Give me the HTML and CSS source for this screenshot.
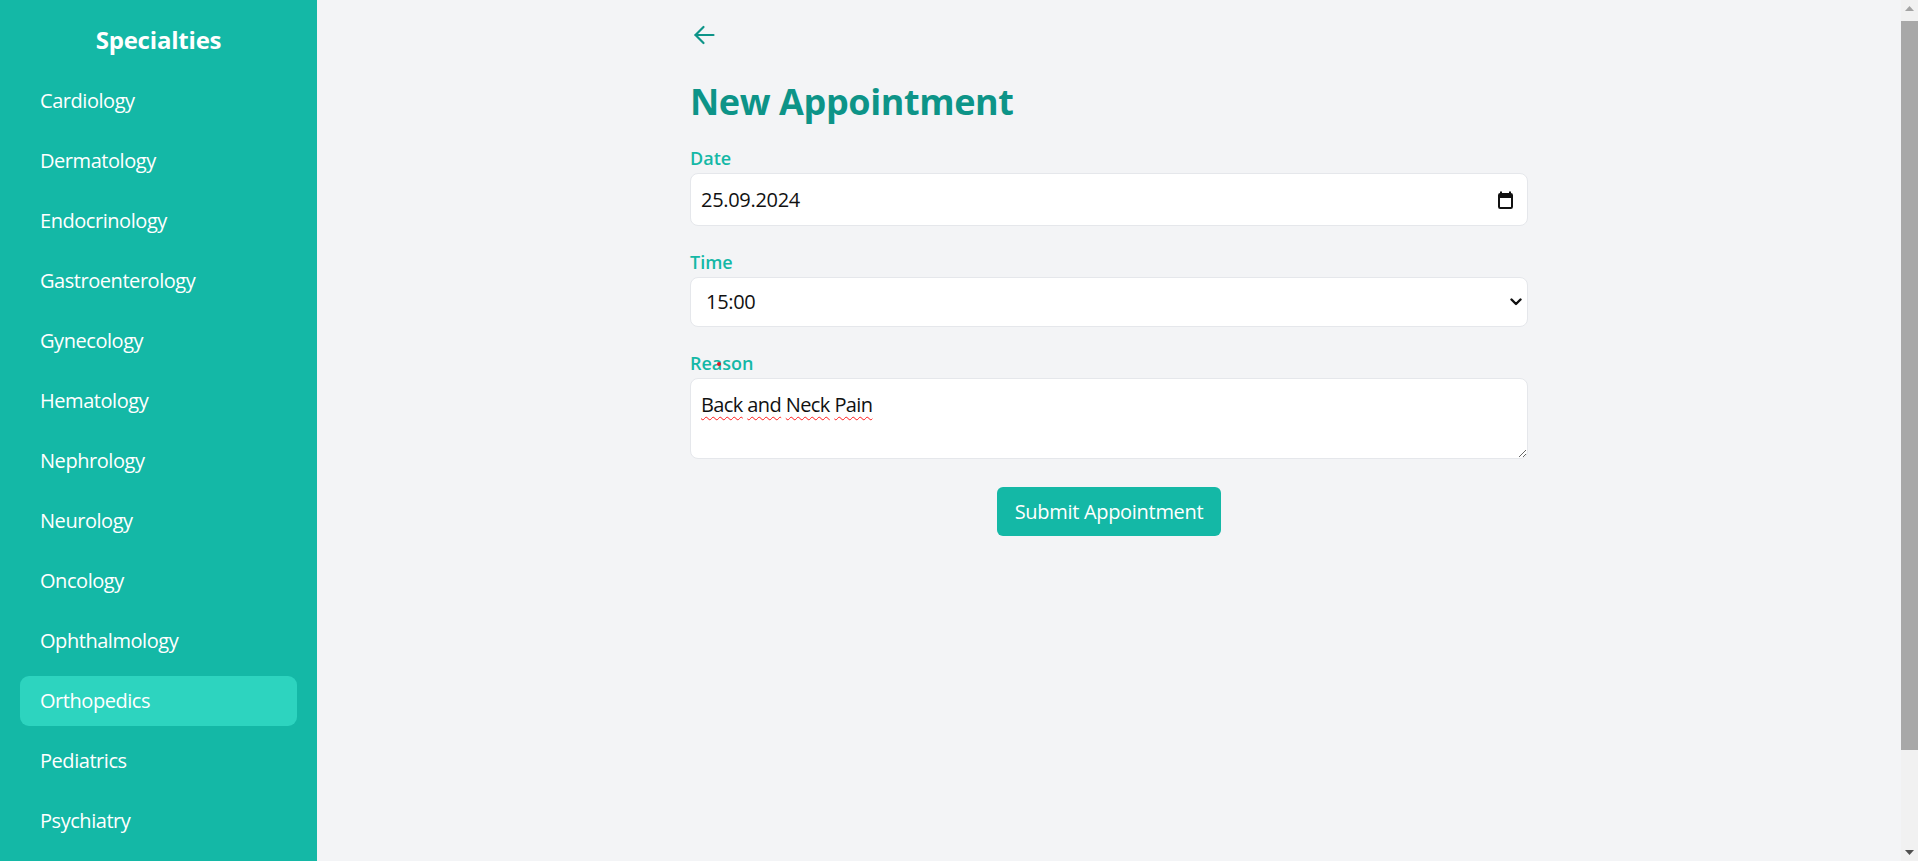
FILE: index.html
```html
<!DOCTYPE html>
<html lang="en">
<head>
<meta charset="utf-8">
<title>New Appointment</title>
<link rel="stylesheet" href="styles.css">
</head>
<body>
<div class="layout">
  <aside class="sidebar">
    <h2 class="sidebar-title">Specialties</h2>
    <ul class="spec-list">
      <li class="spec-item">Cardiology</li>
      <li class="spec-item">Dermatology</li>
      <li class="spec-item">Endocrinology</li>
      <li class="spec-item">Gastroenterology</li>
      <li class="spec-item">Gynecology</li>
      <li class="spec-item">Hematology</li>
      <li class="spec-item">Nephrology</li>
      <li class="spec-item">Neurology</li>
      <li class="spec-item">Oncology</li>
      <li class="spec-item">Ophthalmology</li>
      <li class="spec-item active">Orthopedics</li>
      <li class="spec-item">Pediatrics</li>
      <li class="spec-item">Psychiatry</li>
      <li class="spec-item">Pulmonology</li>
      <li class="spec-item">Urology</li>
    </ul>
  </aside>
  <main class="main">
    <div class="container">
      <button class="back" type="button" aria-label="Back">
        <svg width="22" height="20" viewBox="0 0 22 20" fill="none" stroke="currentColor" stroke-width="2.2" stroke-linecap="round" stroke-linejoin="round"><path d="M20.5 10H2.5"/><path d="M10.5 2L2.5 10L10.5 18"/></svg>
      </button>
      <h1 class="title">New Appointment</h1>
      <form class="form">
        <div class="group">
          <label class="label">Date</label>
          <div class="field field-date">
            <span class="value">25.09.2024</span>
            <svg class="cal" width="15" height="18" viewBox="0 0 15 18"><path d="M3 0.5V3.5M12 0.5V3.5" stroke="#111" stroke-width="2"/><rect x="1" y="3" width="13" height="14" rx="1.2" fill="none" stroke="#111" stroke-width="2"/><rect x="1" y="3" width="13" height="4" fill="#111"/></svg>
          </div>
        </div>
        <div class="group">
          <label class="label">Time</label>
          <div class="field field-select">
            <span class="value">15:00</span>
            <svg class="chev" width="12" height="8" viewBox="0 0 12 8" fill="none" stroke="#111" stroke-width="2.4" stroke-linecap="round" stroke-linejoin="round"><path d="M1.5 1.5L6 6L10.5 1.5"/></svg>
          </div>
        </div>
        <div class="group group-reason">
          <label class="label">Reason<span class="cursor-dot"></span></label>
          <div class="field field-area"><span class="sp">Back</span> <span class="sp">and</span> <span class="sp">Neck</span> <span class="sp">Pain</span></div>
        </div>
        <div class="actions">
          <button class="submit" type="button">Submit Appointment</button>
        </div>
      </form>
    </div>
  </main>
</div>
<div class="scrollbar" aria-hidden="true">
  <div class="sb-btn"><svg width="9" height="5" viewBox="0 0 9 5"><path d="M0 5L4.5 0L9 5Z" fill="#a3a3a3"/></svg></div>
  <div class="sb-track"><div class="sb-thumb"></div></div>
  <div class="sb-btn"><svg width="9" height="5" viewBox="0 0 9 5"><path d="M0 0L4.5 5L9 0Z" fill="#505050"/></svg></div>
</div>
</body>
</html>
```
FILE: styles.css
```css
body {
  margin: 0;
  font-family: "Open Sans", "Noto Sans", sans-serif;
  background: #f3f4f6;
}
.layout {
  display: flex;
  align-items: flex-start;
}
.sidebar {
  width: 317px;
  flex-shrink: 0;
  background: #14b8a6;
  padding: 24px 20px 4px;
  box-sizing: border-box;
  color: #ffffff;
}
.sidebar-title {
  margin: 0 0 20px;
  font-size: 24px;
  line-height: 32px;
  font-weight: 700;
  text-align: center;
  letter-spacing: -0.2px;
}
.spec-list {
  list-style: none;
  margin: 0;
  padding: 0;
}
.spec-item {
  height: 50px;
  display: flex;
  align-items: center;
  padding: 0 20px;
  margin-bottom: 10px;
  font-size: 20px;
  line-height: 28px;
  border-radius: 9px;
  letter-spacing: -0.45px;
}
.spec-item.active {
  background: #2dd4bf;
}
.main {
  flex: 1;
  display: flex;
  justify-content: center;
  padding-right: 17px;
}
.container {
  width: 838px;
  padding-top: 25px;
}
.back {
  display: block;
  border: 0;
  background: none;
  padding: 0;
  margin: 0 0 37px 3px;
  color: #0d9488;
  height: 20px;
  cursor: pointer;
}
.back svg {
  display: block;
}
.title {
  margin: 0 0 22px;
  font-size: 36px;
  line-height: 40px;
  font-weight: 700;
  color: #0d9488;
  letter-spacing: -0.4px;
}
.group {
  margin-bottom: 22px;
}
.group-reason {
  margin-bottom: 28px;
}
.label {
  position: relative;
  display: block;
  font-size: 18px;
  line-height: 28px;
  font-weight: 600;
  color: #14b8a6;
  margin-bottom: 1px;
}
.cursor-dot {
  position: absolute;
  left: 27px;
  top: 13px;
  width: 4px;
  height: 4px;
  border-radius: 50%;
  background: #e11d2a;
}
.field {
  box-sizing: border-box;
  background: #ffffff;
  border: 1px solid #e5e7eb;
  border-radius: 8px;
  font-size: 20px;
  line-height: 28px;
  color: #111111;
  display: flex;
  align-items: center;
  letter-spacing: -0.3px;
}
.field-date {
  height: 53px;
  padding: 0 14px 0 10px;
  justify-content: space-between;
}
.field-select {
  height: 50px;
  padding: 0 5px 0 15px;
  justify-content: space-between;
}
.field-area {
  display: block;
  height: 81px;
  padding: 12px 10px;
  resize: vertical;
  overflow: auto;
  letter-spacing: -0.6px;
}
.sp {
  text-decoration: underline wavy #ff1a1a;
  text-decoration-thickness: 1px;
  text-underline-offset: 4px;
}
.actions {
  display: flex;
  justify-content: center;
}
.submit {
  height: 49px;
  padding: 0 18px;
  border: 0;
  border-radius: 6px;
  background: #14b8a6;
  color: #ffffff;
  font-family: "Open Sans", "Noto Sans", sans-serif;
  font-size: 20px;
  line-height: 28px;
  letter-spacing: -0.3px;
  cursor: pointer;
}
.scrollbar {
  position: fixed;
  top: 0;
  right: 0;
  width: 17px;
  height: 100vh;
  background: #f1f1f1;
  display: flex;
  flex-direction: column;
}
.sb-btn {
  height: 17px;
  display: flex;
  align-items: center;
  justify-content: center;
  flex-shrink: 0;
}
.sb-track {
  flex: 1;
  padding-top: 4px;
}
.sb-thumb {
  height: 729px;
  background: #a8a8a8;
}
```
